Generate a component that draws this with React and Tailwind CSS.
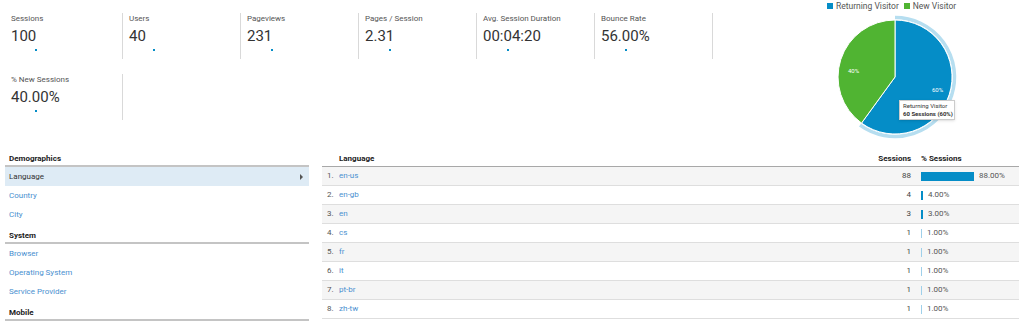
import React from 'react'

const metrics = [
    { label: 'Sessions', value: '100' },
    { label: 'Users', value: '40' },
    { label: 'Pageviews', value: '231' },
    { label: 'Pages / Session', value: '2.31' },
    { label: 'Avg. Session Duration', value: '00:04:20' },
    { label: 'Bounce Rate', value: '56.00%' },
]

const languages = [
    { name: 'en-us', sessions: 88 },
    { name: 'en-gb', sessions: 4 },
    { name: 'en', sessions: 3 },
    { name: 'cs', sessions: 1 },
    { name: 'fr', sessions: 1 },
    { name: 'it', sessions: 1 },
    { name: 'pt-br', sessions: 1 },
    { name: 'zh-tw', sessions: 1 },
]

const Metric = ({ label, value }) => (
    <div className="w-[118px] h-[46px] border-r border-[#d9d9d9] pl-[6px]">
        <div className="text-[8px] leading-[12px] text-[#555]">{label}</div>
        <div className="text-[15px] leading-[20px] mt-[1px] text-[#333]">{value}</div>
        <div className="ml-[24px] mt-[3px] w-[2px] h-[2px] bg-[#058dc7]"></div>
    </div>
)

const SectionHead = ({ children, first }) => (
    <div className={`${first ? 'h-[19px] pt-[5px]' : 'h-[20px] pt-[6px]'} leading-[12px] pl-[4px] font-bold text-[#222] border-b-2 border-[#c4c4c4]`}>
        {children}
    </div>
)

const NavItem = ({ children, active }) => (
    <div className={`h-[19px] leading-[19px] pl-[4px] pr-[6px] flex items-center justify-between ${active ? 'bg-[#deebf5] text-[#333]' : 'text-[#4a90d0]'}`}>
        <span>{children}</span>
        {active && <span className="w-0 h-0 border-l-[3px] border-y-[3px] border-y-transparent border-l-[#555]"></span>}
    </div>
)

const PieChart = () => (
    <div className="relative ml-[30px] w-[130px] h-[130px]">
        <svg width="130" height="130" viewBox="0 0 130 130">
            <path d="M65 5.5 A59.5 59.5 0 1 1 30.03 113.14" fill="none" stroke="#b6def0" strokeWidth="3.5" />
            <path d="M65 65 L65 8 A57 57 0 1 1 31.5 111.1 Z" fill="#058dc7" stroke="#fff" strokeWidth="1" />
            <path d="M65 65 L31.5 111.1 A57 57 0 0 1 65 8 Z" fill="#50b432" stroke="#fff" strokeWidth="1" />
            <text x="18" y="61" fontSize="6" fill="#fff">40%</text>
            <text x="102" y="80" fontSize="6" fill="#fff">60%</text>
        </svg>
        <div className="absolute left-[69px] top-[88px] w-[56px] h-[20px] bg-white border border-[#ccc] px-[3px] pt-[1px] text-[6px] leading-[8px] text-[#333] whitespace-nowrap shadow-sm">
            <div>Returning Visitor</div>
            <div className="font-bold">60 Sessions (60%)</div>
        </div>
    </div>
)

const App = () => {
    return (
        <div className="w-[1024px] h-[323px] bg-white overflow-hidden font-['Roboto',sans-serif] text-[8px]">
            <div className="flex h-[148px]">
                <div className="w-[800px] pl-[5px] pt-[13px] flex flex-col gap-[15px]">
                    <div className="flex">
                        {metrics.map((m) => (
                            <Metric key={m.label} label={m.label} value={m.value} />
                        ))}
                    </div>
                    <div className="flex">
                        <Metric label="% New Sessions" value="40.00%" />
                    </div>
                </div>
                <div className="flex-1">
                    <div className="flex items-center h-[12px] pl-[27px] text-[8.5px] text-[#555]">
                        <span className="w-[6px] h-[6px] bg-[#058dc7] mr-[3px]"></span>
                        <span>Returning Visitor</span>
                        <span className="w-[6px] h-[6px] bg-[#50b432] ml-[5px] mr-[3px]"></span>
                        <span>New Visitor</span>
                    </div>
                    <PieChart />
                </div>
            </div>

            <div className="flex gap-[13px] pl-[5px]">
                <div className="w-[304px]">
                    <SectionHead first>Demographics</SectionHead>
                    <NavItem active>Language</NavItem>
                    <NavItem>Country</NavItem>
                    <NavItem>City</NavItem>
                    <SectionHead>System</SectionHead>
                    <NavItem>Browser</NavItem>
                    <NavItem>Operating System</NavItem>
                    <NavItem>Service Provider</NavItem>
                    <SectionHead>Mobile</SectionHead>
                </div>

                <div className="w-[697px]">
                    <div className="flex h-[19px] pt-[5px] leading-[12px] font-bold text-[#222] border-b border-[#a8a8a8]">
                        <div className="w-[17px]"></div>
                        <div className="flex-1">Language</div>
                        <div className="pr-[10px] text-right">Sessions</div>
                        <div className="w-[98px]">% Sessions</div>
                    </div>
                    {languages.map((l, i) => (
                        <div
                            key={l.name}
                            className={`flex items-center h-[19px] border-b border-[#dedede] ${i % 2 === 0 ? 'bg-[#f5f5f5]' : 'bg-white'}`}
                        >
                            <div className="w-[17px] pl-[5px] text-[#555]">{i + 1}.</div>
                            <div className="flex-1 text-[#4a90d0]">{l.name}</div>
                            <div className="pr-[10px] text-right text-[#444]">{l.sessions}</div>
                            <div className="w-[98px] flex items-center">
                                <div
                                    className={`h-[9px] ${l.sessions < 2 ? 'bg-[#9fd0ea]' : 'bg-[#058dc7]'}`}
                                    style={{ width: Math.max(1, Math.round(l.sessions * 0.6)) }}
                                ></div>
                                <span className="ml-[5px] text-[#555]">{l.sessions.toFixed(2)}%</span>
                            </div>
                        </div>
                    ))}
                </div>
            </div>
        </div>
    )
}

export default App
